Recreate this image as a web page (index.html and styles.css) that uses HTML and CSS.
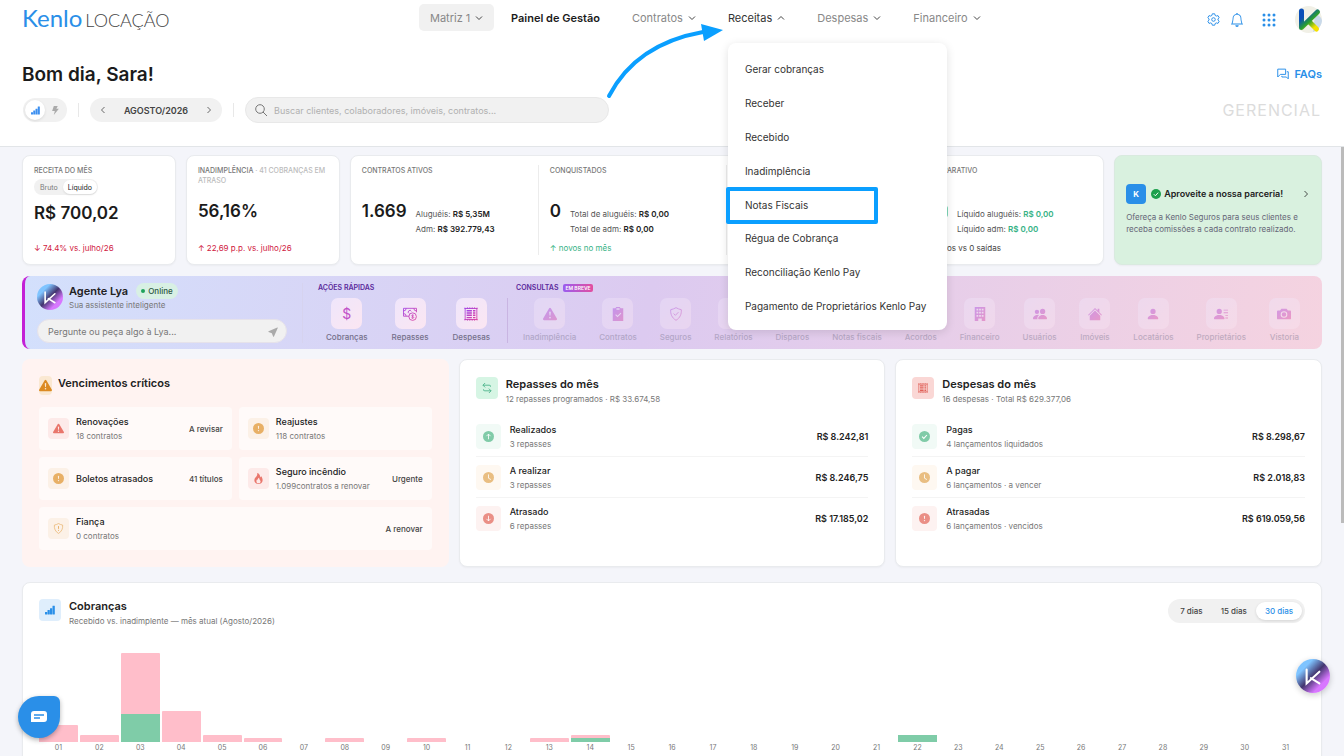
FILE: index.html
```html
<!DOCTYPE html>
<html lang="pt-BR">
<head>
    <meta charset="utf-8">
    <title>Kenlo Locação</title>
    <link rel="stylesheet" href="styles.css">
</head>
<body>
    <svg class="sprite" aria-hidden="true">
        <defs>
            <linearGradient id="lya" x1="0" y1="0" x2="1" y2="1">
                <stop offset="0" stop-color="#a044e8"/>
                <stop offset="1" stop-color="#e0459c"/>
            </linearGradient>
            <linearGradient id="lya-flat" gradientUnits="userSpaceOnUse" x1="0" y1="0" x2="16" y2="16">
                <stop offset="0" stop-color="#a044e8"/>
                <stop offset="1" stop-color="#e0459c"/>
            </linearGradient>
            <linearGradient id="brasil" x1="0" y1="0" x2="0.8" y2="1">
                <stop offset="0.25" stop-color="#0a4fb8"/>
                <stop offset="0.6" stop-color="#2aa02f"/>
                <stop offset="0.95" stop-color="#f4e000"/>
            </linearGradient>
        </defs>
        <symbol id="down" viewBox="0 0 8 8"><path d="M1 2.5l3 3 3-3" fill="none" stroke="currentColor"/></symbol>
        <symbol id="up" viewBox="0 0 8 8"><path d="M1 5.500l3-3 3 3" fill="none" stroke="currentColor"/></symbol>
        <symbol id="left" viewBox="0 0 8 8"><path d="M5.500 1l-3 3 3 3" fill="none" stroke="currentColor" stroke-width=".8"/></symbol>
        <symbol id="right" viewBox="0 0 8 8"><path d="M2.500 1l3 3-3 3" fill="none" stroke="currentColor" stroke-width=".8"/></symbol>
        <symbol id="signal" viewBox="0 0 16 16"><rect x="0" y="11" width="3.700" height="4" rx=".5"/><rect x="4" y="8" width="3.700" height="7" rx=".5"/><rect x="8" y="5" width="3.700" height="10" rx=".5"/><rect x="12" y="1" width="3.700" height="14" rx=".5"/></symbol>
        <symbol id="warning" viewBox="0 0 16 16"><path d="M8.982 1.566a1.13 1.13 0 0 0-1.960 0L.165 13.233c-.457.778.091 1.767.98 1.767h13.713c.889 0 1.438-.99.98-1.767L8.982 1.566zM8 5c.535 0 .954.462.9.995l-.35 3.507a.552.552 0 0 1-1.100 0L7.100 5.995A.905.905 0 0 1 8 5zm.002 6a1 1 0 1 1 0 2 1 1 0 0 1 0-2z"/></symbol>
        <symbol id="alert" viewBox="0 0 16 16"><path fill-rule="evenodd" d="M16 8A8 8 0 1 1 0 8a8 8 0 0 1 16 0zM8 4a.9.9 0 0 0-.9 1l.35 3.500a.552.552 0 0 0 1.100 0L8.900 5A.9.9 0 0 0 8 4zm0 6a1 1 0 1 0 0 2 1 1 0 0 0 0-2z"/></symbol>
        <symbol id="check" viewBox="0 0 16 16"><circle cx="8" cy="8" r="8"/><path d="M4.500 8.300l2.500 2.500 4.500-5" fill="none" stroke="#fff" stroke-width="1.500"/></symbol>
        <symbol id="clock" viewBox="0 0 16 16"><circle cx="8" cy="8" r="8"/><path d="M8 3.500V9l3.500 2" fill="none" stroke="#fff" stroke-width="1.200"/></symbol>
        <symbol id="circle-up" viewBox="0 0 16 16"><circle cx="8" cy="8" r="8"/><path d="M8 12V4.500M5 7.500l3-3 3 3" fill="none" stroke="#fff" stroke-width="1.200"/></symbol>
        <symbol id="circle-down" viewBox="0 0 16 16"><circle cx="8" cy="8" r="8"/><path d="M8 4v7.500M5 8.500l3 3 3-3" fill="none" stroke="#fff" stroke-width="1.200"/></symbol>
        <symbol id="fire" viewBox="0 0 16 16"><path fill-rule="evenodd" d="M8 16c3.300 0 6-2 6-5.500 0-1.500-.5-4-2.500-6 .25 1.500-1.250 2-1.250 2C11 4 9 .5 6 0c.36 2 .5 4-2 6-1.250 1-2 2.730-2 4.500C2 14 4.700 16 8 16zm0-1c-1.700 0-3-1-3-2.750 0-.75.250-2 1.250-3C6.100 10 7 10.500 7 10.500c-.4-1.250.5-3.250 2-3.500-.2 1 0 2 1 3 .6.500 1 1.360 1 2.250C11 14 9.700 15 8 15z"/></symbol>
        <symbol id="shield" viewBox="0 0 16 16"><path d="M8 .8C6 2 4 2.600 2 3c-.6 5 1.500 9.600 6 12.200C12.500 12.600 14.600 8 14 3 12 2.600 10 2 8 .8z" fill="none" stroke="currentColor"/><path d="M8 4.500v4M8 10v1.400" fill="none" stroke="currentColor" stroke-width="1.400"/></symbol>
        <symbol id="shield-check" viewBox="0 0 16 16"><path d="M8 .8C6 2 4 2.600 2 3c-.6 5 1.500 9.600 6 12.200C12.500 12.600 14.600 8 14 3 12 2.600 10 2 8 .8zM5.300 7.500l2 2 3.500-3.600" fill="none" stroke="url(#lya-flat)"/></symbol>
        <symbol id="receipt" viewBox="0 0 16 16"><path fill-rule="evenodd" d="M0 1.500l1-1 1.500.8L4 .3l1.300 1 1.400-1 1.300 1 1.300-1 1.400 1L12 .3l1.500 1 1.500-.8 1 1-.8.8v11.400l.8.8-1 1-1.500-.8-1.500 1-1.300-1-1.400 1-1.300-1-1.300 1-1.400-1-1.300 1-1.500-1-1.500.8-1-1 .8-.8V2.300zM1.800 2.300v11.400h12.400V2.300z"/><path d="M3 3.500h6v1.500H3zm0 2.600h6v1.500H3zm0 2.600h6v1.500H3zm0 2.600h6v1.500H3zM10.300 3.500H13v1.500h-2.700zm0 2.600H13v1.500h-2.700zm0 2.600H13v1.500h-2.700zm0 2.600H13v1.500h-2.700z"/></symbol>
        <symbol id="swap" viewBox="0 0 16 16"><path d="M5 0L1.500 3.500 5 7M1.500 3.500h10a2 2 0 0 1 2 2.500M11 9l3.500 3.500L11 16M14.500 12.500h-10a2 2 0 0 1-2-2.500" fill="none" stroke="currentColor" stroke-width="1.300"/></symbol>
        <symbol id="cash" viewBox="0 0 16 16"><path d="M7 10.500H.6v-9h14.800V6M.6 4.500a3 3 0 0 0 3-3M15.400 4.500a3 3 0 0 1-3-3M.6 7.500a3 3 0 0 1 3 3M9.500 5A1.800 1.800 0 1 0 7 7.300" fill="none" stroke="url(#lya-flat)"/><circle cx="11" cy="11" r="4.300" fill="none" stroke="url(#lya-flat)"/><path d="M12.500 9.700c-.8-.8-2.800-.6-2.700.5.100 1 2.600.6 2.600 1.700 0 1-2 1.200-2.900.3M11 8.500v5" fill="none" stroke="url(#lya-flat)" stroke-width=".8"/></symbol>
        <symbol id="clipboard" viewBox="0 0 16 16"><path fill-rule="evenodd" d="M6 0h4l1 1.500h3V16H2V1.500h3zm.2 1.500v1.700h3.600V1.500zM11 6.500l-3.600 3.600L5.700 8.400l-.8.8 2.500 2.500 4.400-4.400z"/></symbol>
        <symbol id="building" viewBox="0 0 16 16"><path fill-rule="evenodd" d="M2 0h12v16h-4v-3H6v3H2zM4 2v2h2V2zm3 0v2h2V2zm3 0v2h2V2zM4 5.500v2h2v-2zm3 0v2h2v-2zm3 0v2h2v-2zM4 9v2h2V9zm3 0v2h2V9zm3 0v2h2V9z"/></symbol>
        <symbol id="people" viewBox="0 0 16 16"><path d="M7 14s-1 0-1-1 1-4 5-4 5 3 5 4-1 1-1 1H7zm4-6a3 3 0 1 0 0-6 3 3 0 0 0 0 6zM5.216 14A2.238 2.238 0 0 1 5 13c0-1.355.68-2.750 1.936-3.720A6.325 6.325 0 0 0 5 9c-4 0-5 3-5 4s1 1 1 1h4.216zM4.500 8a2.500 2.500 0 1 0 0-5 2.500 2.500 0 0 0 0 5z"/></symbol>
        <symbol id="house" viewBox="0 0 16 16"><path d="M8 1l3 3V2h2v4l3 3-.8.8L8 2.700.8 9.800 0 9zM8 4l6 6v5H2v-5z"/></symbol>
        <symbol id="person" viewBox="0 0 16 16"><path d="M3 14s-1 0-1-1 1-4 6-4 6 3 6 4-1 1-1 1H3zm5-6a3 3 0 1 0 0-6 3 3 0 0 0 0 6z"/></symbol>
        <symbol id="person-lines" viewBox="0 0 16 16"><path d="M6 8a3 3 0 1 0 0-6 3 3 0 0 0 0 6zm-5 6s-1 0-1-1 1-4 6-4 6 3 6 4-1 1-1 1H1zM11 3h5v1h-5zm0 3h5v1h-5zm2 3h3v1h-3zm0 3h3v1h-3z"/></symbol>
        <symbol id="camera" viewBox="0 0 16 16"><path fill-rule="evenodd" d="M5 2h6l1.500 2H15a1 1 0 0 1 1 1v8a1 1 0 0 1-1 1H1a1 1 0 0 1-1-1V5a1 1 0 0 1 1-1h2.500zm3 2.800a3.800 3.800 0 1 0 0 7.600 3.800 3.800 0 0 0 0-7.600zm0 1.200a2.600 2.600 0 1 1 0 5.200A2.600 2.600 0 0 1 8 6z"/></symbol>
        <symbol id="send" viewBox="0 0 16 16"><path d="M14.082 2.182a.5.5 0 0 1 .103.557L8.528 15.467a.5.5 0 0 1-.917-.007L5.570 10.694.803 8.652a.5.5 0 0 1-.006-.916l12.728-5.657a.5.5 0 0 1 .556.103z"/></symbol>
        <symbol id="lya-mark" viewBox="0 0 32 32"><path d="M10 10v13l12-11M14 18l8 5" fill="none" stroke="#fff" stroke-width="2" stroke-linecap="round"/></symbol>
    </svg>

    <header class="header">
        <div class="topbar">
            <a class="logo" href="#"><span class="logo-brand">Kenlo</span><span class="logo-product">LOCAÇÃO</span></a>
            <nav class="nav">
                <label class="branch">
                    <select aria-label="Unidade"><option>Matriz 1</option></select>
                    <svg class="chevron"><use href="#down"/></svg>
                </label>
                <a class="nav-item nav-home" href="#">Painel de Gestão</a>
                <button class="nav-item">Contratos <svg class="chevron"><use href="#down"/></svg></button>
                <div class="nav-group">
                    <button class="nav-item nav-open" aria-expanded="true">Receitas <svg class="chevron"><use href="#up"/></svg></button>
                    <div class="menu">
                        <a href="#">Gerar cobranças</a>
                        <a href="#">Receber</a>
                        <a href="#">Recebido</a>
                        <a href="#">Inadimplência</a>
                        <a class="menu-marked" href="#">Notas Fiscais</a>
                        <a href="#">Régua de Cobrança</a>
                        <a href="#">Reconciliação Kenlo Pay</a>
                        <a href="#">Pagamento de Proprietários Kenlo Pay</a>
                    </div>
                </div>
                <button class="nav-item">Despesas <svg class="chevron"><use href="#down"/></svg></button>
                <button class="nav-item">Financeiro <svg class="chevron"><use href="#down"/></svg></button>
            </nav>
            <div class="tools">
                <button aria-label="Configurações">
                    <svg width="13" height="13" viewBox="0 0 16 16" fill="none" stroke="currentColor" stroke-width="1.2" stroke-linejoin="round"><path d="M6.500 1h3l.5 2 1.500.8 2-.6 1.500 2.600L13.500 7.200v1.600l1.500 1.400-1.500 2.600-2-.6-1.500.8-.5 2h-3L6 13l-1.500-.8-2 .6L1 10.200l1.500-1.400V7.200L1 5.800l1.500-2.600 2 .6L6 3z"/><circle cx="8" cy="8" r="2.200"/></svg>
                </button>
                <button aria-label="Notificações">
                    <svg width="14" height="14" viewBox="0 0 16 16" fill="currentColor"><path d="M8 16a2 2 0 0 0 2-2H6a2 2 0 0 0 2 2zM8 1.918l-.797.161A4.002 4.002 0 0 0 4 6c0 .628-.134 2.197-.459 3.742-.16.767-.376 1.566-.663 2.258h10.244c-.287-.692-.502-1.490-.663-2.258C12.134 8.197 12 6.628 12 6a4.002 4.002 0 0 0-3.203-3.920L8 1.917zM14.220 12c.223.447.481.801.78 1H1c.299-.199.557-.553.78-1C2.680 10.200 3 6.880 3 6c0-2.420 1.720-4.440 4.005-4.901a1 1 0 1 1 1.990 0A5.002 5.002 0 0 1 13 6c0 .88.320 4.200 1.220 6z"/></svg>
                </button>
                <button class="apps" aria-label="Aplicativos">
                    <svg width="14" height="14" viewBox="0 0 14 14" fill="currentColor"><circle cx="2" cy="2" r="1.500"/><circle cx="7" cy="2" r="1.500"/><circle cx="12" cy="2" r="1.500"/><circle cx="2" cy="7" r="1.500"/><circle cx="7" cy="7" r="1.500"/><circle cx="12" cy="7" r="1.500"/><circle cx="2" cy="12" r="1.500"/><circle cx="7" cy="12" r="1.500"/><circle cx="12" cy="12" r="1.500"/></svg>
                </button>
                <button class="profile" aria-label="Perfil">
                    <svg width="27" height="27" viewBox="0 0 27 27"><circle cx="13.5" cy="13.5" r="13.5" fill="#f1f0e6"/><path d="M20 8c5 1 7 5 7 7-1 6-5 10-9 11z" fill="#c9d9ea"/><path d="M6.500 5v16.500L22.500 6M13.500 15l8 8" fill="none" stroke="url(#brasil)" stroke-width="5" stroke-linecap="round" stroke-linejoin="round"/></svg>
                </button>
            </div>
        </div>

        <div class="greeting">
            <h1>Bom dia, Sara!</h1>
            <a class="faqs" href="#">
                <svg width="12" height="12" viewBox="0 0 16 16" fill="none" stroke="currentColor" stroke-width="1.3" stroke-linejoin="round"><path d="M1 1.500h10.500v7H4.500L1 12zM13 5h2v9.500L12.500 12H6.500v-1.500"/></svg>
                FAQs
            </a>
        </div>

        <div class="filters">
            <div class="view-switch">
                <button class="view-on" aria-label="Gerencial"><svg><use href="#signal"/></svg></button>
                <button aria-label="Rápido"><svg viewBox="0 0 16 16"><path d="M5 0h7l-2.500 5H14L5 16l1.800-7H2z"/></svg></button>
            </div>
            <span class="bar-sep"></span>
            <div class="month">
                <button aria-label="Mês anterior"><svg class="chevron"><use href="#left"/></svg></button>
                <span>AGOSTO/2026</span>
                <button aria-label="Próximo mês"><svg class="chevron"><use href="#right"/></svg></button>
            </div>
            <span class="bar-sep"></span>
            <label class="search">
                <svg width="12" height="12" viewBox="0 0 12 12" fill="none" stroke="#777"><circle cx="5" cy="5" r="4.300"/><path d="M8 8l4 4"/></svg>
                <input type="search" aria-label="Buscar" placeholder="Buscar clientes, colaboradores, imóveis, contratos...">
            </label>
            <span class="mode">GERENCIAL</span>
        </div>
    </header>

    <main class="content">
        <section class="kpis">
            <article class="card kpi">
                <h2>RECEITA DO MÊS</h2>
                <div class="mini-switch"><button>Bruto</button><button class="mini-on">Líquido</button></div>
                <strong class="kpi-value">R$ 700,02</strong>
                <p class="trend trend-bad">↓ 74.4% vs. julho/26</p>
            </article>
            <article class="card kpi">
                <h2>INADIMPLÊNCIA <span class="faint">· 41 COBRANÇAS EM ATRASO</span></h2>
                <strong class="kpi-value">56,16%</strong>
                <p class="trend trend-bad">↑ 22,69 p.p. vs. julho/26</p>
            </article>
            <article class="card contracts">
                <div class="kpi">
                    <h2>CONTRATOS ATIVOS</h2>
                    <div class="kpi-line">
                        <strong class="kpi-value">1.669</strong>
                        <p>Aluguéis: <b>R$ 5,35M</b><br>Adm: <b>R$ 392.779,43</b></p>
                    </div>
                </div>
                <div class="kpi">
                    <h2>CONQUISTADOS</h2>
                    <div class="kpi-line">
                        <strong class="kpi-value">0</strong>
                        <p>Total de aluguéis: <b>R$ 0,00</b><br>Total de adm: <b>R$ 0,00</b></p>
                    </div>
                    <p class="trend trend-good">↑ novos no mês</p>
                </div>
                <div class="kpi"></div>
                <div class="kpi">
                    <h2>COMPARATIVO</h2>
                    <div class="kpi-line">
                        <span class="balance"></span>
                        <p>Líquido aluguéis: <b class="good">R$ 0,00</b><br>Líquido adm: <b class="good">R$ 0,00</b></p>
                    </div>
                    <p class="trend">0 novos vs 0 saídas</p>
                </div>
            </article>
            <article class="card partner">
                <a class="partner-head" href="#">
                    <span class="partner-logo">K</span>
                    <svg class="partner-check"><use href="#check"/></svg>
                    <b>Aproveite a nossa parceria!</b>
                    <svg class="chevron"><use href="#right"/></svg>
                </a>
                <p>Ofereça a Kenlo Seguros para seus clientes e receba comissões a cada contrato realizado.</p>
            </article>
        </section>

        <section class="agent">
            <div class="agent-intro">
                <div class="agent-head">
                    <span class="lya-avatar"><svg><use href="#lya-mark"/></svg></span>
                    <div>
                        <h2>Agente Lya <span class="online">Online</span></h2>
                        <p>Sua assistente inteligente</p>
                    </div>
                </div>
                <label class="ask">
                    <input type="text" aria-label="Pergunta" placeholder="Pergunte ou peça algo à Lya...">
                    <svg width="11" height="11" fill="#aaa"><use href="#send"/></svg>
                </label>
            </div>
            <div class="actions quick">
                <h3>AÇÕES RÁPIDAS</h3>
                <div class="tiles">
                    <button class="tile"><span><i>$</i></span>Cobranças</button>
                    <button class="tile"><span><svg><use href="#cash"/></svg></span>Repasses</button>
                    <button class="tile"><span><svg><use href="#receipt"/></svg></span>Despesas</button>
                </div>
            </div>
            <div class="actions queries">
                <h3>CONSULTAS <span class="soon">EM BREVE</span></h3>
                <div class="tiles">
                    <button class="tile" disabled><span><svg><use href="#warning"/></svg></span>Inadimplência</button>
                    <button class="tile" disabled><span><svg><use href="#clipboard"/></svg></span>Contratos</button>
                    <button class="tile" disabled><span><svg><use href="#shield-check"/></svg></span>Seguros</button>
                    <button class="tile" disabled><span></span>Relatórios</button>
                    <button class="tile" disabled><span></span>Disparos</button>
                    <button class="tile" disabled><span></span>Notas fiscais</button>
                    <button class="tile" disabled><span></span>Acordos</button>
                    <button class="tile" disabled><span><svg><use href="#building"/></svg></span>Financeiro</button>
                    <button class="tile" disabled><span><svg><use href="#people"/></svg></span>Usuários</button>
                    <button class="tile" disabled><span><svg><use href="#house"/></svg></span>Imóveis</button>
                    <button class="tile" disabled><span><svg><use href="#person"/></svg></span>Locatários</button>
                    <button class="tile" disabled><span><svg><use href="#person-lines"/></svg></span>Proprietários</button>
                    <button class="tile" disabled><span><svg><use href="#camera"/></svg></span>Vistoria</button>
                </div>
            </div>
        </section>

        <section class="panels">
            <article class="panel critical">
                <header class="panel-head">
                    <span class="panel-icon amber-deep"><svg><use href="#warning"/></svg></span>
                    <h2>Vencimentos críticos</h2>
                </header>
                <div class="dues">
                    <a class="due" href="#"><span class="due-icon red"><svg><use href="#warning"/></svg></span><div><h3>Renovações</h3><p>18 contratos</p></div><em>A revisar</em></a>
                    <a class="due" href="#"><span class="due-icon amber"><svg><use href="#alert"/></svg></span><div><h3>Reajustes</h3><p>118 contratos</p></div></a>
                    <a class="due" href="#"><span class="due-icon amber"><svg><use href="#alert"/></svg></span><div><h3>Boletos atrasados</h3></div><em>41 títulos</em></a>
                    <a class="due" href="#"><span class="due-icon red"><svg><use href="#fire"/></svg></span><div><h3>Seguro incêndio</h3><p>1.099contratos a renovar</p></div><em>Urgente</em></a>
                    <a class="due due-wide" href="#"><span class="due-icon amber"><svg><use href="#shield"/></svg></span><div><h3>Fiança</h3><p>0 contratos</p></div><em>A renovar</em></a>
                </div>
            </article>

            <article class="card panel">
                <header class="panel-head">
                    <span class="panel-icon mint"><svg><use href="#swap"/></svg></span>
                    <div><h2>Repasses do mês</h2><p>12 repasses programados · R$ 33.674,58</p></div>
                </header>
                <ul class="entries">
                    <li><span class="entry-icon green"><svg><use href="#circle-up"/></svg></span><div><h3>Realizados</h3><p>3 repasses</p></div><b>R$ 8.242,81</b></li>
                    <li><span class="entry-icon yellow"><svg><use href="#clock"/></svg></span><div><h3>A realizar</h3><p>3 repasses</p></div><b>R$ 8.246,75</b></li>
                    <li><span class="entry-icon coral"><svg><use href="#circle-down"/></svg></span><div><h3>Atrasado</h3><p>6 repasses</p></div><b>R$ 17.185,02</b></li>
                </ul>
            </article>

            <article class="card panel">
                <header class="panel-head">
                    <span class="panel-icon rose"><svg><use href="#receipt"/></svg></span>
                    <div><h2>Despesas do mês</h2><p>16 despesas · Total R$ 629.377,06</p></div>
                </header>
                <ul class="entries">
                    <li><span class="entry-icon green"><svg><use href="#check"/></svg></span><div><h3>Pagas</h3><p>4 lançamentos liquidados</p></div><b>R$ 8.298,67</b></li>
                    <li><span class="entry-icon yellow"><svg><use href="#clock"/></svg></span><div><h3>A pagar</h3><p>6 lançamentos · a vencer</p></div><b>R$ 2.018,83</b></li>
                    <li><span class="entry-icon coral"><svg><use href="#alert"/></svg></span><div><h3>Atrasadas</h3><p>6 lançamentos · vencidos</p></div><b>R$ 619.059,56</b></li>
                </ul>
            </article>
        </section>

        <section class="card panel billing">
            <header class="panel-head">
                <span class="panel-icon blue"><svg><use href="#signal"/></svg></span>
                <div><h2>Cobranças</h2><p>Recebido vs. inadimplente — mês atual (Agosto/2026)</p></div>
                <div class="period"><button>7 dias</button><button>15 dias</button><button class="period-on">30 dias</button></div>
            </header>
            <ol class="chart">
                <li><span class="late" style="height: 17px"></span>01</li>
                <li><span class="late" style="height: 7px"></span>02</li>
                <li><span class="late" style="height: 61px"></span><span class="paid" style="height: 28px"></span>03</li>
                <li><span class="late" style="height: 31px"></span>04</li>
                <li><span class="late" style="height: 7px"></span>05</li>
                <li><span class="late" style="height: 4px"></span>06</li>
                <li>07</li>
                <li><span class="late" style="height: 4px"></span>08</li>
                <li>09</li>
                <li><span class="late" style="height: 4px"></span>10</li>
                <li>11</li>
                <li>12</li>
                <li><span class="late" style="height: 4px"></span>13</li>
                <li><span class="late" style="height: 3px"></span><span class="paid" style="height: 4px"></span>14</li>
                <li>15</li>
                <li>16</li>
                <li>17</li>
                <li>18</li>
                <li>19</li>
                <li>20</li>
                <li>21</li>
                <li><span class="paid" style="height: 7px"></span>22</li>
                <li>23</li>
                <li>24</li>
                <li>25</li>
                <li>26</li>
                <li>27</li>
                <li>28</li>
                <li>29</li>
                <li>30</li>
                <li>31</li>
            </ol>
        </section>
        <span class="scroll-thumb"></span>
    </main>

    <svg class="pointer" width="120" height="80" viewBox="0 0 120 80" aria-hidden="true">
        <path d="M5 76Q32 24 99 12" fill="none" stroke="#0a9fff" stroke-width="4" stroke-linecap="round"/>
        <path d="M97 4l22 6-19 11z" fill="#0a9fff"/>
    </svg>
    <button class="chat" aria-label="Chat">
        <svg width="18" height="14" viewBox="0 0 18 14"><path d="M4 1h10a3 3 0 0 1 3 3v5a3 3 0 0 1-3 3H1V4a3 3 0 0 1 3-3z" fill="#fff"/><path d="M4 5h10M4 8h6" stroke="#2a8fe8" stroke-width="1.300"/></svg>
    </button>
    <button class="lya-avatar lya-float" aria-label="Agente Lya"><svg><use href="#lya-mark"/></svg></button>
</body>
</html>
```

FILE: styles.css
```css
* {
    box-sizing: border-box;
    margin: 0;
    padding: 0;
}
body {
    height: 100vh;
    display: flex;
    flex-direction: column;
    overflow: hidden;
    background: #f4f5fa;
    color: #222;
    font-family: Inter, "Liberation Sans", sans-serif;
    font-size: 8px;
}
button, input, select {
    border: 0;
    background: none;
    color: inherit;
    font: inherit;
}
button {
    cursor: pointer;
}
a {
    color: inherit;
    text-decoration: none;
}
ul, ol {
    list-style: none;
}
em {
    font-style: normal;
}
svg {
    flex: none;
}
svg:not([fill]) {
    fill: currentColor;
}
.sprite {
    position: absolute;
    width: 0;
    height: 0;
}
.chevron {
    width: 8px;
    height: 8px;
}

/* header */
.header {
    flex: none;
    height: 147px;
    padding: 4px 22px 0;
    background: #fff;
    border-bottom: 1px solid #e2e5e8;
}
.topbar {
    display: grid;
    grid-template-columns: 397px 1fr auto;
    align-items: start;
}
.logo {
    display: flex;
    align-items: baseline;
    gap: 3px;
    font-family: Lato, sans-serif;
    line-height: 28px;
}
.logo-brand {
    color: #2a8fe8;
    font-size: 24px;
}
.logo-product {
    color: #444;
    font-size: 18px;
    font-weight: 300;
}
.nav {
    display: flex;
    align-items: center;
    font-size: 11px;
    color: #888;
}
.branch {
    display: flex;
    align-items: center;
    height: 27px;
    width: 75px;
    padding: 0 11px;
    margin-right: 17px;
    border-radius: 5px;
    background: #f1f1f1;
}
.branch select {
    flex: 1;
    min-width: 0;
    appearance: none;
}
.nav-item {
    display: flex;
    align-items: center;
    gap: 5px;
    margin-right: 32px;
}
.nav .chevron {
    color: #444;
}
.nav-home {
    color: #1b1b1b;
    font-weight: 600;
}
.nav-open {
    color: #333;
}
.nav-group {
    position: relative;
}
.menu {
    position: absolute;
    z-index: 5;
    top: 32px;
    left: 0;
    width: 219px;
    padding: 10px 0 6px;
    border-radius: 8px;
    background: #fff;
    box-shadow: 0 2px 10px rgba(0, 0, 0, 0.12);
    color: #333;
    font-size: 10px;
    line-height: 17px;
}
.menu a {
    display: block;
    padding: 8px 0 9px 17px;
    white-space: nowrap;
}
.menu a.menu-marked {
    width: 152px;
    margin: -2px 0 -2px -2px;
    padding: 6px 0 6px 15px;
    border: 4px solid #0a9fff;
    border-radius: 2px;
}
.tools {
    display: flex;
    align-items: center;
    gap: 10px;
    padding-top: 2px;
    color: #2a8fe8;
}
.tools button {
    display: flex;
}
.apps {
    margin: 0 9px 0 8px;
}
.greeting {
    display: flex;
    justify-content: space-between;
    align-items: center;
    height: 30px;
    margin-top: 25px;
}
.greeting h1 {
    font-size: 19px;
    font-weight: 600;
    color: #1b1b1b;
}
.faqs {
    display: flex;
    align-items: center;
    gap: 5px;
    font-size: 11px;
    font-weight: 600;
    color: #2a8fe8;
}
.filters {
    display: flex;
    align-items: center;
    gap: 11px;
    margin-top: 8px;
    padding: 0 1px;
}
.view-switch {
    display: flex;
    align-items: center;
    height: 24px;
    padding: 2px;
    border-radius: 12px;
    background: #f1f1f1;
    color: #aaa;
}
.view-switch button {
    display: grid;
    place-items: center;
    width: 20px;
    height: 20px;
    border-radius: 50%;
}
.view-switch svg {
    width: 9px;
    height: 9px;
}
.view-switch .view-on {
    background: #fff;
    color: #3c8ff0;
    box-shadow: 0 1px 3px rgba(0, 0, 0, 0.1);
}
.bar-sep {
    width: 1px;
    height: 14px;
    background: #e8e8e8;
}
.month {
    display: flex;
    align-items: center;
    justify-content: space-between;
    width: 132px;
    height: 24px;
    padding: 0 9px;
    border-radius: 12px;
    background: #f1f1f1;
    font-size: 9px;
    font-weight: 600;
    color: #444;
}
.search {
    display: flex;
    align-items: center;
    gap: 7px;
    width: 364px;
    height: 26px;
    padding: 0 9px;
    border: 1px solid #e8e8e8;
    border-radius: 13px;
    background: #f1f1f1;
    font-size: 9px;
}
.search input {
    flex: 1;
}
.search input::placeholder {
    color: #b0b0b0;
}
.mode {
    margin-left: auto;
    font-size: 16px;
    letter-spacing: 1px;
    color: #dcdcdc;
}

/* content */
.content {
    flex: 1;
    min-height: 0;
    position: relative;
    padding: 8px 22px;
    overflow: hidden;
}
.card {
    border: 1px solid #e9ebee;
    border-radius: 8px;
    background: #fff;
    box-shadow: 0 1px 2px rgba(0, 0, 0, 0.04);
}
.kpis {
    display: grid;
    grid-template-columns: 154fr 154fr 755fr 208fr;
    gap: 10px;
    height: 110px;
}
.kpi {
    display: flex;
    flex-direction: column;
    padding: 10px 11px;
    min-width: 0;
}
.kpi h2 {
    font-size: 7px;
    font-weight: 500;
    line-height: 10px;
    color: #777;
}
.kpi .faint {
    color: #bbb;
}
.kpi-value {
    margin-top: 7px;
    font-size: 17px;
    font-weight: 600;
    line-height: 22px;
    color: #1b1b1b;
}
.kpi h2 + .kpi-value {
    margin-top: 14px;
}
.trend {
    margin-top: auto;
    font-size: 8px;
    line-height: 12px;
    color: #444;
}
.trend-bad {
    color: #d02040;
}
.trend-good, .good {
    color: #35b285;
}
.mini-switch {
    display: flex;
    align-self: start;
    height: 16px;
    margin-top: 3px;
    padding: 1px;
    border-radius: 8px;
    background: #f1f1f1;
    font-size: 7px;
    color: #777;
}
.mini-switch button {
    padding: 0 5px;
    border-radius: 7px;
}
.mini-switch .mini-on {
    background: #fff;
    color: #222;
    box-shadow: 0 1px 2px rgba(0, 0, 0, 0.1);
}
.contracts {
    display: grid;
    grid-template-columns: repeat(4, 1fr);
}
.contracts .kpi {
    position: relative;
}
.contracts .kpi + .kpi::before {
    content: "";
    position: absolute;
    left: -1px;
    top: 9px;
    bottom: 9px;
    width: 1px;
    background: #ececec;
}
.kpi-line {
    display: flex;
    gap: 9px;
    margin-top: 24px;
    line-height: 15px;
    color: #555;
    white-space: nowrap;
}
.kpi-line .kpi-value {
    margin: 0;
}
.kpi-line p {
    padding-top: 7px;
}
.kpi-line b {
    font-weight: 600;
    color: #222;
}
.kpi-line b.good {
    color: #35b285;
}
.balance {
    width: 22px;
    height: 11px;
    margin-top: 6px;
    border-radius: 2px;
    background: #7ed6b8;
}
.partner {
    display: flex;
    flex-direction: column;
    justify-content: center;
    gap: 7px;
    padding: 0 11px 2px;
    background: #d9f1df;
    border-color: #d9eadf;
    line-height: 12px;
    color: #667;
}
.partner-head {
    display: flex;
    align-items: center;
    color: #222;
}
.partner-head b {
    flex: 1;
    font-size: 9px;
    font-weight: 600;
}
.partner-logo {
    width: 20px;
    height: 20px;
    border-radius: 4px;
    background: #2a8fe8;
    color: #fff;
    font-weight: 700;
    line-height: 20px;
    text-align: center;
}
.partner-check {
    width: 10px;
    height: 10px;
    margin: 0 3px 0 5px;
    color: #1ca04c;
}

/* agent */
.agent {
    display: flex;
    height: 73px;
    margin-top: 11px;
    padding: 7px 15px 0 12px;
    border-left: 3px solid #c320d6;
    border-radius: 8px;
    background: linear-gradient(100deg, #d3e0fc, #dccaf0 48%, #f5d3e0);
}
.agent-intro {
    width: 266px;
    height: 60px;
    padding-right: 15px;
    border-right: 1px solid #d6d3ef;
}
.agent-head {
    display: flex;
    align-items: center;
    gap: 6px;
}
.agent-head h2 {
    display: flex;
    align-items: center;
    gap: 8px;
    font-size: 11px;
    font-weight: 600;
    line-height: 16px;
}
.agent-head p {
    line-height: 12px;
    color: #777;
}
.online {
    display: flex;
    align-items: center;
    gap: 3px;
    padding: 0 5px;
    border-radius: 8px;
    background: #d8f0e4;
    color: #2b5540;
    font-size: 8px;
    font-weight: 500;
}
.online::before {
    content: "";
    width: 4px;
    height: 4px;
    border-radius: 50%;
    background: #1fa35c;
}
.lya-avatar {
    display: grid;
    place-items: center;
    width: 26px;
    height: 26px;
    border-radius: 50%;
    background: linear-gradient(135deg, #7fc4ff 25%, #43366f 50%, #d877ff 75%);
}
.lya-avatar svg {
    width: 100%;
    height: 100%;
}
.ask {
    display: flex;
    align-items: center;
    height: 24px;
    margin-top: 8px;
    padding: 0 7px 0 10px;
    border: 1px solid #e6e2ea;
    border-radius: 12px;
    background: #f1f1f1;
    font-size: 9px;
}
.ask input {
    flex: 1;
}
.ask input::placeholder {
    color: #777;
}
.actions h3 {
    display: flex;
    align-items: center;
    gap: 5px;
    font-size: 7px;
    font-weight: 600;
    line-height: 9px;
    color: #5b2a9c;
}
.quick {
    width: 205px;
    padding-left: 15px;
}
.quick .tiles {
    justify-content: flex-start;
    gap: 24px;
    padding-left: 8px;
    border-right: 1px solid #c9b5e2;
}
.queries {
    flex: 1;
    padding-left: 8px;
}
.soon {
    padding: 0 2px;
    border-radius: 2px;
    background: linear-gradient(90deg, #9a5cf0, #e24f9f);
    color: #fff;
    font-size: 5px;
    line-height: 8px;
}
.tiles {
    display: flex;
    justify-content: space-between;
    margin-top: 6px;
    padding: 0 7px;
}
.tile {
    display: flex;
    flex-direction: column;
    align-items: center;
    gap: 2px;
    font-size: 8px;
    font-weight: 500;
    line-height: 12px;
    color: #74708a;
}
.tile span {
    display: grid;
    place-items: center;
    width: 31px;
    height: 31px;
    border-radius: 7px;
    background: linear-gradient(135deg, #efe6fb, #fbe6f2);
}
.tile i {
    font-size: 14px;
    font-style: normal;
    font-weight: 400;
    color: #c050c8;
}
.tile svg {
    width: 14px;
    height: 14px;
    fill: url(#lya);
}
.tile:disabled {
    opacity: 0.4;
}

/* panels */
.panels {
    display: grid;
    grid-template-columns: repeat(3, 1fr);
    gap: 10px;
    height: 207px;
    margin-top: 10px;
}
.panel {
    padding: 17px 16px;
    border-radius: 8px;
}
.critical {
    padding: 17px;
    background: #fff3f1;
}
.panel-head {
    display: flex;
    gap: 8px;
}
.panel-head h2 {
    font-size: 11px;
    font-weight: 600;
    line-height: 15px;
    color: #222;
}
.panel-head p {
    line-height: 14px;
    color: #777;
}
.panel-icon {
    display: grid;
    place-items: center;
    width: 22px;
    height: 22px;
    border-radius: 4px;
}
.panel-icon svg {
    width: 10px;
    height: 10px;
}
.mint {
    background: #d6f5e4;
    color: #3fae82;
}
.rose {
    background: #fad7d5;
    color: #e06058;
}
.blue {
    background: #dfeefc;
    color: #2a8fe8;
}
.amber-deep {
    width: 13px;
    height: 19px;
    background: #fae8d2;
    color: #dc8a22;
}
.amber-deep svg {
    width: 13px;
    height: 13px;
}
.critical .panel-head {
    gap: 6px;
}
.dues {
    display: grid;
    grid-template-columns: 1fr 1fr;
    grid-auto-rows: 43px;
    gap: 7px;
    margin-top: 12px;
}
.due {
    display: flex;
    align-items: center;
    gap: 7px;
    padding: 0 9px;
    border-radius: 4px;
    background: #fffaf9;
}
.due-wide {
    grid-column: span 2;
}
.due-icon {
    display: grid;
    place-items: center;
    width: 21px;
    height: 21px;
    border-radius: 4px;
}
.due-icon svg {
    width: 11px;
    height: 11px;
}
.red {
    background: #fdeae9;
    color: #e9766c;
}
.amber {
    background: #fcf1e7;
    color: #e8b066;
}
.due h3, .entries h3 {
    font-size: 9px;
    font-weight: 500;
    line-height: 15px;
    color: #222;
}
.due p, .entries p {
    line-height: 14px;
    color: #777;
}
.due em {
    margin-left: auto;
    font-weight: 500;
    color: #444;
}
.entries {
    margin-top: 10px;
}
.entries li {
    display: flex;
    align-items: center;
    gap: 9px;
    height: 41px;
    border-bottom: 1px solid #f4f4f4;
}
.entries li:last-child {
    border: 0;
}
.entries b {
    margin-left: auto;
    font-size: 9px;
    font-weight: 600;
    color: #222;
}
.entry-icon {
    display: grid;
    place-items: center;
    width: 25px;
    height: 25px;
    border-radius: 4px;
}
.entry-icon svg {
    width: 11px;
    height: 11px;
}
.green {
    background: #f1faf6;
    color: #80cba8;
}
.yellow {
    background: #fef8f1;
    color: #e9be82;
}
.coral {
    background: #fdf2f1;
    color: #ea8f86;
}

/* billing chart */
.billing {
    margin-top: 16px;
    height: 210px;
    padding-top: 16px;
}
.period {
    display: flex;
    height: 24px;
    margin-left: auto;
    padding: 3px;
    border-radius: 12px;
    background: #f1f1f1;
    color: #444;
    font-weight: 500;
}
.period button {
    padding: 0 9px;
    border-radius: 9px;
}
.period .period-on {
    background: #fff;
    color: #2a8fe8;
    box-shadow: 0 1px 3px rgba(0, 0, 0, 0.12);
}
.chart {
    display: flex;
    gap: 2px;
    height: 124px;
    margin-top: 2px;
}
.chart li {
    flex: 1;
    display: flex;
    flex-direction: column;
    justify-content: flex-end;
    font-size: 7px;
    line-height: 12px;
    text-align: center;
    color: #777;
}
.late {
    background: #ffbeca;
    border-radius: 1px 1px 0 0;
}
.paid {
    background: #7fcca8;
}

/* floating items */
.scroll-thumb {
    position: absolute;
    top: 0;
    right: 0;
    width: 3px;
    height: 376px;
    background: #bbb;
}
.pointer {
    position: absolute;
    left: 604px;
    top: 20px;
}
.chat {
    position: fixed;
    left: 18px;
    bottom: 18px;
    display: grid;
    place-items: center;
    width: 42px;
    height: 42px;
    border-radius: 21px 6px 21px 21px;
    background: #2a8fe8;
    box-shadow: 0 2px 5px rgba(0, 0, 0, 0.3);
}
.lya-float {
    position: fixed;
    right: 14px;
    bottom: 63px;
    width: 34px;
    height: 34px;
    box-shadow: 0 2px 6px rgba(0, 0, 0, 0.2);
}
```
